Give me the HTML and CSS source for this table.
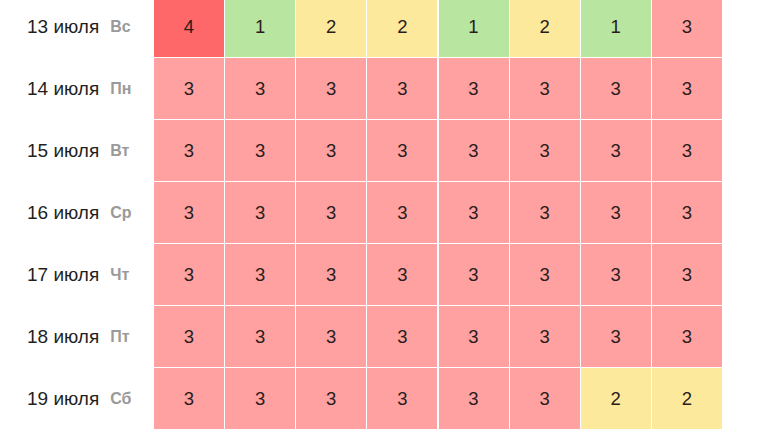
FILE: index.html
```html
<!DOCTYPE html>
<html lang="ru">
<head>
<meta charset="utf-8">
<link rel="stylesheet" href="styles.css">
</head>
<body>
<div class="table">
  <div class="row">
    <div class="label"><span class="date">13 июля</span><span class="dow">Вс</span></div>
    <div class="cells">
      <div class="cell c4">4</div><div class="cell c1">1</div><div class="cell c2">2</div><div class="cell c2">2</div><div class="cell c1">1</div><div class="cell c2">2</div><div class="cell c1">1</div><div class="cell c3">3</div>
    </div>
  </div>
  <div class="row">
    <div class="label"><span class="date">14 июля</span><span class="dow">Пн</span></div>
    <div class="cells">
      <div class="cell c3">3</div><div class="cell c3">3</div><div class="cell c3">3</div><div class="cell c3">3</div><div class="cell c3">3</div><div class="cell c3">3</div><div class="cell c3">3</div><div class="cell c3">3</div>
    </div>
  </div>
  <div class="row">
    <div class="label"><span class="date">15 июля</span><span class="dow">Вт</span></div>
    <div class="cells">
      <div class="cell c3">3</div><div class="cell c3">3</div><div class="cell c3">3</div><div class="cell c3">3</div><div class="cell c3">3</div><div class="cell c3">3</div><div class="cell c3">3</div><div class="cell c3">3</div>
    </div>
  </div>
  <div class="row">
    <div class="label"><span class="date">16 июля</span><span class="dow">Ср</span></div>
    <div class="cells">
      <div class="cell c3">3</div><div class="cell c3">3</div><div class="cell c3">3</div><div class="cell c3">3</div><div class="cell c3">3</div><div class="cell c3">3</div><div class="cell c3">3</div><div class="cell c3">3</div>
    </div>
  </div>
  <div class="row">
    <div class="label"><span class="date">17 июля</span><span class="dow">Чт</span></div>
    <div class="cells">
      <div class="cell c3">3</div><div class="cell c3">3</div><div class="cell c3">3</div><div class="cell c3">3</div><div class="cell c3">3</div><div class="cell c3">3</div><div class="cell c3">3</div><div class="cell c3">3</div>
    </div>
  </div>
  <div class="row">
    <div class="label"><span class="date">18 июля</span><span class="dow">Пт</span></div>
    <div class="cells">
      <div class="cell c3">3</div><div class="cell c3">3</div><div class="cell c3">3</div><div class="cell c3">3</div><div class="cell c3">3</div><div class="cell c3">3</div><div class="cell c3">3</div><div class="cell c3">3</div>
    </div>
  </div>
  <div class="row">
    <div class="label"><span class="date">19 июля</span><span class="dow">Сб</span></div>
    <div class="cells">
      <div class="cell c3">3</div><div class="cell c3">3</div><div class="cell c3">3</div><div class="cell c3">3</div><div class="cell c3">3</div><div class="cell c3">3</div><div class="cell c2">2</div><div class="cell c2">2</div>
    </div>
  </div>
</div>
</body>
</html>
```

FILE: styles.css
```css
html, body {
  margin: 0;
  padding: 0;
  background: #ffffff;
  overflow: hidden;
}
body {
  width: 760px;
  height: 432px;
  font-family: "Liberation Sans", Arial, sans-serif;
}
.table {
  display: flex;
  flex-direction: column;
  row-gap: 1px;
  margin-top: -4px;
}
.row {
  display: flex;
  height: 61px;
}
.label {
  width: 154px;
  box-sizing: border-box;
  padding-left: 27px;
  display: flex;
  align-items: center;
  gap: 11px;
}
.date {
  font-size: 19px;
  color: #1f1f1f;
}
.dow {
  font-size: 16px;
  font-weight: bold;
  color: #9a9a9a;
}
.cells {
  display: grid;
  grid-template-columns: repeat(8, 70px);
  column-gap: 1.14px;
}
.cell {
  display: flex;
  align-items: center;
  justify-content: center;
  font-size: 18.5px;
  color: #2a1c1c;
}
.c1 { background: #b8e6a0; }
.c2 { background: #fde99c; }
.c3 { background: #ffa1a1; }
.c4 { background: #ff6868; }
```
